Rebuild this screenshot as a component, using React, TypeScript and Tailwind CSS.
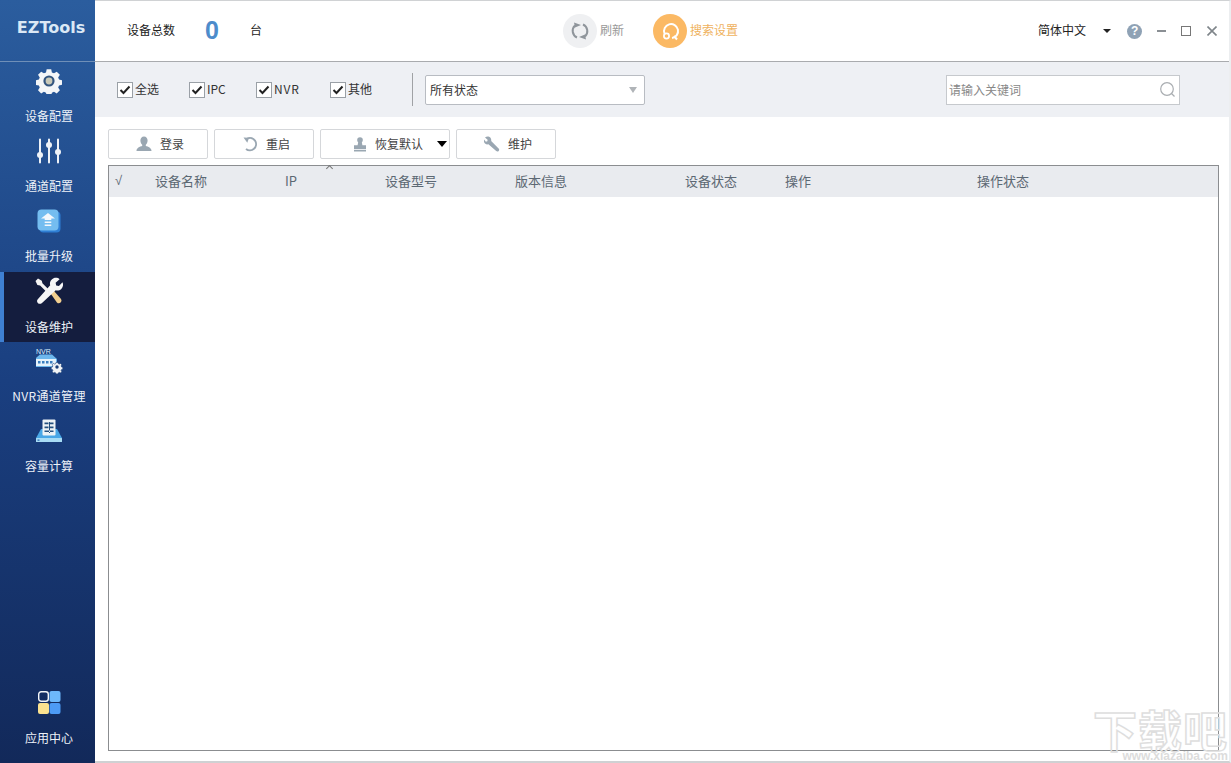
import React from "react";

const Gear = () => (
  <svg width="26" height="26" viewBox="0 0 26 26">
    <path fill="#f4f6f8" d="M10.6 0.8h4.8l.7 3.3 2.2.9 2.9-1.8 3.3 3.3-1.8 2.9.9 2.2 3.2.7v4.8l-3.2.7-.9 2.2 1.8 2.9-3.3 3.3-2.9-1.8-2.2.9-.7 3.2h-4.8l-.7-3.2-2.2-.9-2.9 1.8-3.3-3.3 1.8-2.9-.9-2.2-3.2-.7v-4.8l3.2-.7.9-2.2-1.8-2.9 3.3-3.3 2.9 1.8 2.2-.9z" transform="translate(0.6 0.6) scale(0.95)" />
    <circle cx="13" cy="13" r="5.6" fill="#33557f" />
    <circle cx="13" cy="13" r="3.4" fill="#c9c9b8" />
  </svg>
);

const Sliders = () => (
  <svg width="26" height="26" viewBox="0 0 26 26" stroke="#eef2f7" strokeWidth="2" strokeLinecap="round" fill="#eef2f7">
    <path d="M4 1.5v23M13 1.5v23M22 1.5v23" />
    <circle cx="4" cy="17" r="3" stroke="none" />
    <circle cx="13" cy="7" r="3" stroke="none" />
    <circle cx="22" cy="14" r="3" stroke="none" />
  </svg>
);

const Upgrade = () => (
  <svg width="24" height="24" viewBox="0 0 24 24">
    <rect x="2.5" y="2.5" width="21" height="21" rx="4" fill="#2f7fd4" />
    <rect x="0.5" y="0.5" width="21" height="21" rx="4" fill="#74bdf0" />
    <path d="M11 4l7 5.500h-3.700v1.500H7.700V9.500H4z" fill="#f4f8fc" />
    <path d="M7.700 12.500h6.600v1.500H7.700zM7.700 15.500h6.600v1.500H7.700z" fill="#f4f8fc" />
  </svg>
);

const Tools = () => (
  <svg width="28" height="28" viewBox="0 0 28 28">
    <path d="M3 1.5l3.8 2.2.6 2.6 9.5 9.5-2.3 2.3-9.5-9.5-2.7-.6L.5 4z" fill="#f4f4f4" />
    <path d="M15.6 16.6l3-3 7.2 8.2c1 1.2.9 2.7-.2 3.7s-2.6 1-3.7-.1z" fill="#f2cf8f" />
    <path d="M18.6 1.2c2.4-.8 4.6-.2 6 1l-4 3.6.6 2.6 2.7.7 3.6-3.8c1 2.2.6 4.8-1.2 6.6-1.6 1.5-3.6 2-5.6 1.4L7 26c-1.4 1.2-3.1 1.1-4.2 0-1.1-1.2-1-2.9.2-4.1L15.2 8.3c-.9-2.800.5-5.900 3.400-7.100z" fill="#f7f7f7" />
  </svg>
);

const Nvr = () => (
  <svg width="28" height="26" viewBox="0 0 28 26">
    <path d="M2 9l3-2.500h12l5 4.500v8H1V10z" fill="#6db7ec" />
    <rect x="1" y="11" width="20" height="7" fill="#e6f3fb" />
    <path d="M3 13h2.500v2.500H3zM7 13h2.500v2.500H7zM11 13h2.500v2.500H11zM15 13h2.500v2.500H15z" fill="#3b7fc0" />
    <path fill="#f2f4f6" stroke="#1a3f78" strokeWidth="0.800" strokeLinejoin="round" d="M20.800 13.500h2.400l.4 1.500 1.400.6 1.400-.8 1.600 1.700-.8 1.300.6 1.500 1.500.3v2.400l-1.500.4-.6 1.400.8 1.300-1.600 1.700-1.400-.8-1.400.6-.4 1.400h-2.400l-.4-1.400-1.400-.6-1.400.8-1.600-1.700.8-1.300-.6-1.400-1.500-.4v-2.400l1.500-.3.6-1.500-.8-1.300 1.600-1.700 1.400.8 1.400-.6z" transform="translate(4.400 3.600) scale(0.8)" />
    <circle cx="22" cy="19" r="1.700" fill="#1a3f78" />
    <text x="1" y="6" fontSize="7" fontWeight="400" fill="#dff0fb" fontFamily="Liberation Sans, sans-serif">NVR</text>
  </svg>
);

const Disk = () => (
  <svg width="28" height="26" viewBox="0 0 28 26">
    <path d="M6 11h16l5 9v4H1v-4z" fill="#49a7e6" />
    <rect x="1" y="20" width="26" height="4" rx="0.500" fill="#a8dcf5" />
    <rect x="2.500" y="21.500" width="2" height="1.300" fill="#2d6fb5" />
    <rect x="7.500" y="1.500" width="13" height="16" rx="1" fill="#eef3f6" />
    <path d="M9.500 4.500h4v1.700h-4zM15 4.500h3.500v1.700H15zM9.500 8.500h4v1.700h-4zM15 8.500h3.500v1.700H15zM9.500 12.500h9v1.500h-9zM14 4v11h1V4z" fill="#25517f" />
  </svg>
);

const Apps = () => (
  <svg width="24" height="24" viewBox="0 0 24 24">
    <rect x="1.700" y="1.700" width="9.600" height="9.600" rx="2.500" fill="none" stroke="#f4f6f8" strokeWidth="1.400" />
    <rect x="12.500" y="1" width="11" height="11" rx="2" fill="#6db8fb" />
    <rect x="1" y="13" width="11" height="11" rx="2" fill="#fbe28f" />
    <rect x="12.500" y="13" width="11" height="11" rx="2" fill="#4d9bf5" />
  </svg>
);

const PersonIcon = () => (
  <svg width="16" height="16" viewBox="0 0 16 16" fill="#9aa7b2">
    <path d="M8 0.500c2.200 0 3.600 1.700 3.600 4 0 1.800-.8 3.300-1.800 4.300v1.200c2.400.6 5.700 1.700 5.700 5H0.500c0-3.300 3.300-4.400 5.700-5V8.800c-1-1-1.800-2.500-1.800-4.300 0-2.300 1.400-4 3.600-4z" />
  </svg>
);

const RestartIcon = () => (
  <svg width="16" height="16" viewBox="0 0 16 16" fill="none">
    <path d="M5.500 2.400A6.200 6.200 0 1 1 4 13" stroke="#9aa7b2" strokeWidth="1.900" />
    <path d="M1.500 1.500l5.500 .3-1.700 5z" fill="#9aa7b2" />
  </svg>
);

const StampIcon = () => (
  <svg width="14" height="15" viewBox="0 0 14 15" fill="#9aa7b2">
    <circle cx="7" cy="3" r="2.800" />
    <path d="M5.200 5h3.600l.6 3.200H13V12H1V8.200h3.600z" />
    <rect x="1" y="12.800" width="12" height="1.700" />
  </svg>
);

const WrenchIcon = () => (
  <svg width="16" height="16" viewBox="0 0 16 16" fill="#9aa7b2">
    <path d="M4.500 0.500c-1.300-.2-2.600.2-3.500 1l2.600 2.300-.2 1.500-1.500.4L0 3.400c-.4 1.500 0 3 1 4 1 .9 2.200 1.200 3.400.9l7.800 6.800c.7.600 1.800.6 2.500-.1.700-.8.600-1.800-.1-2.500L7.200 5C7.600 3.200 6.400 .8 4.500 .5z" />
  </svg>
);

const RefreshCircle = () => (
  <div className="flex h-[34px] w-[34px] items-center justify-center rounded-full bg-[#eff0f2]">
    <svg width="20" height="20" viewBox="0 0 20 20" fill="none">
      <path d="M5 4.500A7.300 7.300 0 0 0 7 16.500" stroke="#8f959b" strokeWidth="2" />
      <path d="M15 15.500A7.300 7.300 0 0 0 13 3.500" stroke="#8f959b" strokeWidth="2" />
      <path d="M4 1.500l7 2.500-6 2.500zM16 18.500l-7-2.500 6-2.500z" fill="#8f959b" />
    </svg>
  </div>
);

const SearchCircle = () => (
  <div className="flex h-[34px] w-[34px] items-center justify-center rounded-full bg-[#fbb964]">
    <svg width="22" height="22" viewBox="0 0 22 22" fill="none">
      <path d="M5.500 13.500A7 7 0 1 1 13 18" stroke="#fff" strokeWidth="2" />
      <path d="M15 16l3 3.500" stroke="#fff" strokeWidth="2" />
      <circle cx="7.500" cy="16" r="2.600" stroke="#fff" strokeWidth="1.700" />
    </svg>
  </div>
);

const navItems = [
  { label: "设备配置", icon: <Gear /> },
  { label: "通道配置", icon: <Sliders /> },
  { label: "批量升级", icon: <Upgrade /> },
  { label: "设备维护", icon: <Tools />, active: true },
  { label: "NVR通道管理", icon: <Nvr />, wide: true },
  { label: "容量计算", icon: <Disk /> },
];

const NavItem = ({ label, icon, active, wide }: { label: string; icon: React.ReactNode; active?: boolean; wide?: boolean }) => (
  <div className={`flex h-[70px] flex-col items-center ${active ? "border-l-4 border-[#3f80d2] bg-[#141d3e] pr-[1px]" : "pl-[4px] pr-[1px]"}`}>
    <div className="mt-[5px] flex h-[28px] w-full items-center justify-center">{icon}</div>
    <div className={`mt-[12px] w-full whitespace-nowrap text-center text-[12px] leading-[18px] text-[#eef2f8] ${wide ? "tracking-[0.35px]" : ""} ${active ? "pt-[1px]" : ""}`}>{label}</div>
  </div>
);

const Check = ({ label, className, wide }: { label: string; className: string; wide?: boolean }) => (
  <label className={`flex items-center gap-[2px] text-[12px] text-[#333] ${className}`}>
    <span className="flex h-[16px] w-[16px] items-center justify-center border border-[#9aa0a6] bg-white">
      <svg width="12" height="10" viewBox="0 0 12 10" fill="none">
        <path d="M1.500 5l3 3 6-6.500" stroke="#222" strokeWidth="2" />
      </svg>
    </span>
    <span className={`pb-[2px] ${wide ? "tracking-[0.8px]" : ""}`}>{label}</span>
  </label>
);

const Btn = ({ icon, label, className, caret }: { icon: React.ReactNode; label: string; className: string; caret?: boolean }) => (
  <div className={`relative flex h-[30px] items-center gap-[8px] rounded-[2px] border border-[#d5d7da] bg-white text-[12px] text-[#444] ${className}`}>
    {icon}
    <span>{label}</span>
    {caret && <span className="absolute right-[2px] top-[11px] h-0 w-0 border-x-[5px] border-t-[6px] border-x-transparent border-t-black" />}
  </div>
);

const cols = [
  { t: "√", w: "w-[46px] pl-[6px] font-['Liberation_Sans',sans-serif]" },
  { t: "设备名称", w: "w-[130px]" },
  { t: "IP", w: "w-[100px]" },
  { t: "设备型号", w: "w-[130px]" },
  { t: "版本信息", w: "w-[170px]" },
  { t: "设备状态", w: "w-[100px]" },
  { t: "操作", w: "w-[192px]" },
  { t: "操作状态", w: "w-[120px]" },
];

export default function App() {
  return (
    <div className="relative flex h-[763px] w-[1231px] overflow-hidden bg-white font-['Noto_Sans_CJK_SC','Liberation_Sans',sans-serif]">
      <aside className="flex w-[95px] shrink-0 flex-col bg-gradient-to-b from-[#2b5d9e] via-[#1a3f80] to-[#12295a]">
        <div className="flex h-[62px] items-center justify-center border-b border-[#6f8fb8] pb-[5px] pl-[7px] font-['DejaVu_Sans',sans-serif] text-[16px] font-bold text-[#dbe8f5]">
          EZTools
        </div>
        {navItems.map((n) => (
          <NavItem key={n.label} {...n} />
        ))}
        <div className="mt-auto flex h-[80px] flex-col items-center pl-[4px] pr-[1px] pt-[7px]">
          <Apps />
          <div className="mt-[15px] text-[12px] leading-[18px] text-[#eef2f8]">应用中心</div>
        </div>
      </aside>

      <main className="flex min-w-0 flex-1 flex-col border-t border-[#d0d2d4] border-r-2 border-r-[#eceef0] border-b-2 border-b-[#cfd1d3]">
        <header className="flex h-[61px] shrink-0 items-center border-b border-[#a9abae] text-[12px] text-[#222]">
          <span className="ml-[32px] pb-[2px]">设备总数</span>
          <span className="ml-[30px] w-[14px] font-['Liberation_Sans',sans-serif] text-[25px] font-bold text-[#4d8ccb]">0</span>
          <span className="ml-[31px] pb-[2px]">台</span>
          <div className="ml-[301px] flex items-center gap-[3px] text-[#999]">
            <RefreshCircle />
            <span className="pb-[2px]">刷新</span>
          </div>
          <div className="ml-[29px] flex items-center gap-[3px] text-[#efb25e]">
            <SearchCircle />
            <span className="pb-[2px]">搜索设置</span>
          </div>
          <span className="ml-[300px] pb-[2px]">简体中文</span>
          <span className="ml-[17px] h-0 w-0 border-x-[4px] border-t-[4px] border-x-transparent border-t-[#222]" />
          <div className="ml-[16px] flex h-[15px] w-[15px] items-center justify-center rounded-full bg-[#8fa2b5] font-['Liberation_Sans',sans-serif] text-[12px] font-bold text-white">?</div>
          <span className="ml-[15px] h-[2px] w-[9px] bg-[#8a8f94]" />
          <span className="ml-[15px] h-[10px] w-[10px] border border-[#777]" />
          <svg className="ml-[16px]" width="10" height="10" viewBox="0 0 10 10" stroke="#7f858a" strokeWidth="1.600"><path d="M0.500 0.500l9 9M9.500 0.500l-9 9" /></svg>
        </header>

        <div className="flex h-[55px] shrink-0 items-center bg-[#eef0f4] text-[12px]">
          <Check label="全选" className="ml-[22px] w-[72px]" />
          <Check label="IPC" className="w-[67px]" />
          <Check label="NVR" wide className="w-[74px]" />
          <Check label="其他" className="w-[82px]" />
          <span className="h-[33px] w-px bg-[#a0a2a5]" />
          <div className="ml-[12px] flex h-[30px] w-[220px] items-center justify-between rounded-[2px] border border-[#b8bcc2] bg-white pl-[4px] pr-[7px] text-[#333]">
            <span>所有状态</span>
            <span className="h-0 w-0 border-x-[4px] border-t-[6px] border-x-transparent border-t-[#b0b4b8]" />
          </div>
          <div className="ml-[301px] flex h-[30px] w-[234px] items-center justify-between border border-[#c6c9cd] bg-white pl-[2px] pr-[3px] text-[#888]">
            <span>请输入关键词</span>
            <svg width="17" height="17" viewBox="0 0 17 17" fill="none" stroke="#a9adb1" strokeWidth="1.200"><circle cx="8" cy="8" r="6.300" /><path d="M12.500 12.500l3 3" /></svg>
          </div>
        </div>

        <div className="flex shrink-0 gap-[6px] pl-[13px] pt-[12px]">
          <Btn icon={<PersonIcon />} label="登录" className="w-[100px] pl-[27px]" />
          <Btn icon={<RestartIcon />} label="重启" className="w-[100px] pl-[27px]" />
          <Btn icon={<StampIcon />} label="恢复默认" caret className="w-[130px] pl-[32px]" />
          <Btn icon={<WrenchIcon />} label="维护" className="w-[100px] pl-[27px]" />
        </div>

        <div className="relative ml-[13px] mt-[6px] h-[586px] w-[1111px] border border-[#8b8d90]">
          <span className="absolute left-[218px] top-0 h-[5px] w-[5px] rotate-45 border-l border-t border-[#777]" />
          <div className="flex h-[31px] items-center bg-[#e9ebef] pb-[2px] text-[13px] text-[#5c6873]">
            {cols.map((c) => (
              <span key={c.t} className={`shrink-0 ${c.w}`}>{c.t}</span>
            ))}
          </div>
        </div>

        <div className="pointer-events-none absolute right-[3px] top-[707px] flex w-[136px] flex-col items-end">
          <span className="h-[44px] whitespace-nowrap text-[44px] font-bold leading-[44px] tracking-[1px] text-transparent [-webkit-text-stroke:1.5px_#dedede]">下载吧</span>
          <span className="font-['Liberation_Sans',sans-serif] text-[12px] font-bold leading-[11px] text-[#dcdcdc]">www.xiazaiba.com</span>
        </div>
      </main>
    </div>
  );
}
